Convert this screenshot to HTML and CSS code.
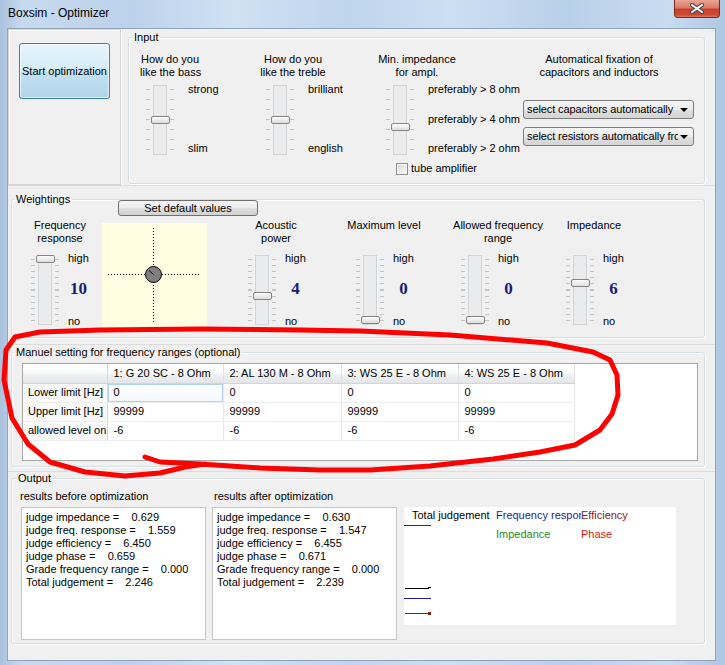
FILE: index.html
```html
<!DOCTYPE html>
<html lang="en">
<head>
    <meta charset="UTF-8">
    <title>Boxsim - Optimizer</title>
    <link rel="stylesheet" href="styles.css">
</head>
<body>

<div class="window">
    <div class="titlebar">
        <span class="title">Boxsim - Optimizer</span>
        <div class="close-btn">
            <svg width="16" height="11" viewBox="0 0 16 11">
                <path d="M3 2 L13 9 M13 2 L3 9" stroke="#4b4b4b" stroke-width="4" stroke-linecap="round"/>
                <path d="M3 2 L13 9 M13 2 L3 9" stroke="#fff" stroke-width="2" stroke-linecap="round"/>
            </svg>
        </div>
    </div>

    <div class="client">
        <!-- top: start button + input -->
        <div class="row row-top">
            <div class="panel start-panel">
                <button class="start-btn">Start optimization</button>
            </div>
            <div class="input-panel">
                <fieldset class="group group-input">
                    <legend>Input</legend>
                    <div class="input-cols">
                        <div class="in-col col-bass">
                            <div class="in-head head-bass">How do you<br>like the bass</div>
                            <div class="slider-row">
                                <div class="slider">
                                    <div class="ticks"></div><div class="track"></div><div class="ticks"></div>
                                    <div class="thumb" style="top: 31px"></div>
                                </div>
                                <div class="in-labels"><span>strong</span><span>slim</span></div>
                            </div>
                        </div>
                        <div class="in-col col-treble">
                            <div class="in-head head-treble">How do you<br>like the treble</div>
                            <div class="slider-row">
                                <div class="slider">
                                    <div class="ticks"></div><div class="track"></div><div class="ticks"></div>
                                    <div class="thumb" style="top: 31px"></div>
                                </div>
                                <div class="in-labels"><span>brilliant</span><span>english</span></div>
                            </div>
                        </div>
                        <div class="in-col col-imp">
                            <div class="in-head head-imp">Min. impedance<br>for ampl.</div>
                            <div class="slider-row">
                                <div class="slider">
                                    <div class="ticks"></div><div class="track"></div><div class="ticks"></div>
                                    <div class="thumb" style="top: 38px"></div>
                                </div>
                                <div class="in-labels">
                                    <span>preferably &gt; 8 ohm</span>
                                    <span>preferably &gt; 4 ohm</span>
                                    <span>preferably &gt; 2 ohm</span>
                                </div>
                            </div>
                            <div class="check-row">
                                <span class="checkbox"></span>
                                <span>tube amplifier</span>
                            </div>
                        </div>
                        <div class="in-col col-fix">
                            <div class="in-head head-fix">Automatical fixation of<br>capacitors and inductors</div>
                            <div class="combo combo-first">
                                <span class="combo-text">select capacitors automatically</span>
                                <span class="combo-arrow"></span>
                            </div>
                            <div class="combo">
                                <span class="combo-text">select resistors automatically from</span>
                                <span class="combo-arrow"></span>
                            </div>
                        </div>
                    </div>
                </fieldset>
            </div>
        </div>

        <!-- weightings -->
        <div class="row row-weight">
            <fieldset class="group group-weight">
                <legend>Weightings</legend>
                <button class="btn set-default">Set default values</button>
                <div class="w-cols">
                    <div class="w-col col-freq">
                        <div class="w-head head-freq">Frequency<br>response</div>
                        <div class="slider-row w-row">
                            <div class="slider slider-w">
                                <div class="ticks"></div><div class="track"></div><div class="ticks"></div>
                                <div class="thumb" style="top: 0px"></div>
                            </div>
                            <div class="w-labels"><span>high</span><span class="w-num">10</span><span>no</span></div>
                        </div>
                    </div>
                    <div class="pad">
                        <svg width="105" height="107" viewBox="0 0 105 107">
                            <line x1="6" y1="51.5" x2="99" y2="51.5" stroke="#000" stroke-dasharray="1 2"/>
                            <line x1="51.5" y1="5" x2="51.5" y2="100" stroke="#000" stroke-dasharray="1 2"/>
                            <circle cx="51.5" cy="51.5" r="8" fill="#808080" stroke="#000"/>
                            <line x1="47" y1="47.5" x2="51.5" y2="51.5" stroke="#000"/>
                        </svg>
                    </div>
                    <div class="w-col col-ac">
                        <div class="w-head head-ac">Acoustic<br>power</div>
                        <div class="slider-row w-row">
                            <div class="slider slider-w">
                                <div class="ticks"></div><div class="track"></div><div class="ticks"></div>
                                <div class="thumb" style="top: 37px"></div>
                            </div>
                            <div class="w-labels"><span>high</span><span class="w-num">4</span><span>no</span></div>
                        </div>
                    </div>
                    <div class="w-col col-max">
                        <div class="w-head head-max">Maximum level</div>
                        <div class="slider-row w-row">
                            <div class="slider slider-w">
                                <div class="ticks"></div><div class="track"></div><div class="ticks"></div>
                                <div class="thumb" style="top: 61px"></div>
                            </div>
                            <div class="w-labels"><span>high</span><span class="w-num">0</span><span>no</span></div>
                        </div>
                    </div>
                    <div class="w-col col-range">
                        <div class="w-head head-range">Allowed frequency<br>range</div>
                        <div class="slider-row w-row">
                            <div class="slider slider-w">
                                <div class="ticks"></div><div class="track"></div><div class="ticks"></div>
                                <div class="thumb" style="top: 61px"></div>
                            </div>
                            <div class="w-labels"><span>high</span><span class="w-num">0</span><span>no</span></div>
                        </div>
                    </div>
                    <div class="w-col col-wimp">
                        <div class="w-head head-wimp">Impedance</div>
                        <div class="slider-row w-row">
                            <div class="slider slider-w">
                                <div class="ticks"></div><div class="track"></div><div class="ticks"></div>
                                <div class="thumb" style="top: 24px"></div>
                            </div>
                            <div class="w-labels"><span>high</span><span class="w-num">6</span><span>no</span></div>
                        </div>
                    </div>
                </div>
            </fieldset>
        </div>

        <!-- frequency ranges -->
        <div class="row row-ranges">
            <fieldset class="group group-ranges">
                <legend>Manuel setting for frequency ranges (optional)</legend>
                <div class="grid-wrap">
                    <table class="grid">
                        <colgroup>
                            <col style="width: 84px"><col style="width: 116px"><col style="width: 118px">
                            <col style="width: 117px"><col style="width: 116px">
                        </colgroup>
                        <tr>
                            <th class="fixed"></th>
                            <th>1: G 20 SC - 8 Ohm</th>
                            <th>2: AL 130 M - 8 Ohm</th>
                            <th>3: WS 25 E - 8 Ohm</th>
                            <th>4: WS 25 E - 8 Ohm</th>
                        </tr>
                        <tr>
                            <td class="fixed">Lower limit [Hz]</td>
                            <td class="sel">0</td><td>0</td><td>0</td><td>0</td>
                        </tr>
                        <tr>
                            <td class="fixed">Upper limit [Hz]</td>
                            <td>99999</td><td>99999</td><td>99999</td><td>99999</td>
                        </tr>
                        <tr>
                            <td class="fixed">allowed level on</td>
                            <td>-6</td><td>-6</td><td>-6</td><td>-6</td>
                        </tr>
                    </table>
                </div>
            </fieldset>
        </div>

        <!-- output -->
        <div class="row row-output">
            <fieldset class="group group-output">
                <legend>Output</legend>
                <div class="out-cols">
                    <div class="out-col">
                        <div class="out-label">results before optimization</div>
                        <div class="memo">judge impedance =    0.629
judge freq. response =    1.559
judge efficiency =    6.450
judge phase =    0.659
Grade frequency range =    0.000
Total judgement =    2.246</div>
                    </div>
                    <div class="out-col out-col-after">
                        <div class="out-label">results after optimization</div>
                        <div class="memo">judge impedance =    0.630
judge freq. response =    1.547
judge efficiency =    6.455
judge phase =    0.671
Grade frequency range =    0.000
Total judgement =    2.239</div>
                    </div>
                    <div class="chart">
                        <div class="chart-legend">
                            <span>Total judgement</span>
                            <span class="c-blue">Frequency response</span>
                            <span class="c-maroon">Efficiency</span>
                            <span></span>
                            <span class="c-green">Impedance</span>
                            <span class="c-red">Phase</span>
                        </div>
                        <svg class="chart-lines" width="272" height="118" viewBox="0 0 272 118">
                            <line x1="0" y1="18.5" x2="27" y2="18.5" stroke="#7a1414"/>
                            <line x1="1" y1="81.5" x2="25" y2="81.5" stroke="#000"/>
                            <line x1="24" y1="80.5" x2="27" y2="80.5" stroke="#000"/>
                            <line x1="0" y1="91.5" x2="27" y2="91.5" stroke="#1c1c9c"/>
                            <line x1="1" y1="106.5" x2="25" y2="106.5" stroke="#8a1e12"/>
                            <rect x="24" y="105" width="3" height="3" fill="#8a1e12"/>
                        </svg>
                    </div>
                </div>
            </fieldset>
        </div>
    </div>

    <!-- hand drawn marker -->
    <svg class="annotation" width="725" height="665" viewBox="0 0 725 665">
        <polyline fill="none" stroke="#f00" stroke-width="5" stroke-linejoin="round" stroke-linecap="round"
            points="145,457 160,462 200,464 260,468 320,470 370,470 430,466 493,459 540,452 575,445 600,430 612,414 618,395 617,375 610,360 593,352 547,343 450,335 360,331 300,330 200,329 100,330 40,332 15,337 6,350 4,380 12,418 28,444 50,462 85,472 125,476 160,473 185,467 205,464"/>
    </svg>
</div>

</body>
</html>
```

FILE: styles.css
```css
body {
    margin: 0;
    font-family: "Liberation Sans", Arial, sans-serif;
    font-size: 11px;
    line-height: 13px;
    color: #000;
    background: #c3d7ed;
}

.window {
    position: relative;
    width: 725px;
    height: 665px;
    overflow: hidden;
    background: linear-gradient(90deg, #a9c2dd 0%, #c6daef 3%, #bcd2ea 18%, #d0e1f3 32%, #bfd5ec 48%, #cddff2 62%, #b9d0e9 78%, #c9dcf0 92%, #aec7e2 100%);
}

/* title bar */
.titlebar {
    height: 28px;
    display: flex;
    align-items: flex-start;
}

.title {
    margin: 5px 0 0 8px;
    font-size: 12px;
    line-height: 16px;
}

.close-btn {
    margin: 0 5px 0 auto;
    width: 46px;
    height: 18px;
    box-sizing: border-box;
    border: 1px solid #7b2a20;
    border-top: none;
    border-radius: 0 0 4px 4px;
    background: linear-gradient(#e9a696 0%, #dc7a66 45%, #c8412c 55%, #c94a33 85%, #dd7560 100%);
    display: flex;
    align-items: center;
    justify-content: center;
}

/* client area */
.client {
    margin: 0 9px 0 7px;
    height: 633px;
    box-sizing: border-box;
    border: 1px solid #8fa3ba;
    background: #f0f0f0;
}

.row {
    box-sizing: border-box;
}

.row-top {
    height: 156px;
    display: flex;
}

.row-weight {
    height: 159px;
    border-top: 1px solid #dcdcdc;
}

.row-ranges {
    height: 127px;
    border-top: 1px solid #dcdcdc;
}

.row-output {
    height: 189px;
    border-top: 1px solid #dcdcdc;
}

.start-panel {
    width: 113px;
    box-sizing: border-box;
    border: 1px solid #d6d6d6;
    box-shadow: inset 1px 1px 0 #fff;
}

.start-btn {
    display: block;
    margin: 13px 0 0 10px;
    width: 91px;
    height: 56px;
    padding: 0;
    border: 1px solid #3c7fb1;
    border-radius: 3px;
    background: linear-gradient(#e6f4fc 0%, #d5ecf9 50%, #c2e1f3 52%, #b2d5ea 100%);
    box-shadow: inset 0 0 0 1px rgba(255, 255, 255, 0.6);
    font-family: "Liberation Sans", Arial, sans-serif;
    font-size: 11px;
    color: #000;
}

.input-panel {
    flex: 1;
    border-left: 1px solid #fff;
}

/* group boxes */
.group {
    margin: 0;
    padding: 0;
    min-width: 0;
    box-sizing: border-box;
    border: 1px solid #d5dfe5;
    border-radius: 3px;
    box-shadow: inset 1px 1px 0 #fff, 1px 1px 0 #fff;
}

.group legend {
    margin-left: 2px;
    padding: 0 2px;
    line-height: 13px;
}

.group-input {
    margin: 2px 10px 0 6px;
    height: 153px;
}

.group-input legend {
    margin-left: 3px;
}

.group-weight {
    margin: 7px 10px 0 3px;
    height: 145px;
}

.group-ranges {
    margin: 1px 10px 0 3px;
    height: 121px;
}

.group-output {
    margin: 0 10px 0 3px;
    height: 172px;
}

.group-output legend {
    margin-left: 4px;
}

/* input columns */
.input-cols {
    display: flex;
    margin-top: 9px;
}

.in-col {
    flex: none;
}

.col-bass { width: 118px; margin-left: 11px; }
.col-treble { width: 118px; }
.col-imp { width: 147px; }
.col-fix { width: 171px; }

.in-head {
    white-space: nowrap;
    text-align: center;
    height: 26px;
}

.head-bass { width: 60px; }
.head-treble { width: 70px; }
.head-imp { width: 82px; }
.head-fix { width: 152px; }

.slider-row {
    display: flex;
    margin-top: 6px;
}

.col-bass .slider { margin-left: 6px; }
.col-treble .slider { margin-left: 8px; }
.col-imp .slider { margin-left: 10px; }

.slider {
    position: relative;
    display: flex;
    height: 70px;
    flex: none;
}

.ticks {
    width: 4px;
    height: 61px;
    margin-top: 4px;
    background: repeating-linear-gradient(#c4c4c4 0 1px, transparent 1px 10px);
}

.track {
    width: 14px;
    height: 70px;
    margin: 0 3px;
    box-sizing: border-box;
    border: 1px solid #d4d4d4;
    background: #e9ebec;
}

.thumb {
    position: absolute;
    left: 5px;
    width: 19px;
    height: 8px;
    box-sizing: border-box;
    border: 1px solid #858585;
    border-radius: 2px;
    background: linear-gradient(#fdfdfd, #dcdcdc);
}

.in-labels {
    margin: -2px 0 0 14px;
    height: 72px;
    display: flex;
    flex-direction: column;
    justify-content: space-between;
    white-space: nowrap;
}

.check-row {
    display: flex;
    align-items: center;
    margin: 7px 0 0 20px;
}

.checkbox {
    width: 12px;
    height: 12px;
    margin-right: 3px;
    box-sizing: border-box;
    border: 1px solid #8f8f8f;
    background: linear-gradient(135deg, #d8d8d8, #fafafa);
    box-shadow: inset 0 0 0 1px #f4f4f4;
}

.combo {
    display: flex;
    align-items: center;
    width: 171px;
    height: 19px;
    margin-top: 8px;
    padding-left: 3px;
    box-sizing: border-box;
    border: 1px solid #7c7c7c;
    border-radius: 3px;
    background: linear-gradient(#f5f5f5 0%, #ececec 50%, #e0e0e0 51%, #d4d4d4 100%);
}

.combo-first {
    margin-top: 21px;
}

.combo-text {
    flex: 1;
    overflow: hidden;
    white-space: nowrap;
    letter-spacing: -0.1px;
}

.combo-arrow {
    flex: none;
    width: 0;
    height: 0;
    margin: 0 5px 0 2px;
    border-left: 4px solid transparent;
    border-right: 4px solid transparent;
    border-top: 4px solid #000;
}

/* weightings */
.btn {
    font-family: "Liberation Sans", Arial, sans-serif;
    font-size: 11px;
    color: #000;
    padding: 0;
    border: 1px solid #707070;
    border-radius: 3px;
    background: linear-gradient(#f4f4f4 0%, #ececec 50%, #dedede 51%, #d2d2d2 100%);
}

.set-default {
    display: block;
    margin: -6px 0 0 106px;
    width: 140px;
    height: 16px;
    line-height: 13px;
}

.w-cols {
    display: flex;
    align-items: flex-start;
    margin-top: 3px;
}

.w-col {
    flex: none;
}

.col-freq { width: 71px; margin-left: 19px; }
.col-ac { width: 108px; margin-left: 41px; }
.col-max { width: 105px; }
.col-range { width: 105px; }
.col-wimp { width: 100px; }

.w-head {
    height: 26px;
    white-space: nowrap;
    text-align: center;
}

.head-freq { width: 58px; }
.head-ac { width: 56px; }
.head-max { width: 80px; margin-left: -12px; }
.head-range { width: 100px; margin-left: -13px; }
.head-wimp { width: 60px; margin-left: -2px; }

.w-row {
    margin-top: 10px;
}

.slider-w .ticks {
    height: 62px;
    background: repeating-linear-gradient(#c4c4c4 0 1px, transparent 1px 6.1px);
}

.w-labels {
    margin: -3px 0 0 9px;
    height: 76px;
    display: flex;
    flex-direction: column;
    justify-content: space-between;
    align-items: flex-start;
}

.w-num {
    align-self: center;
    margin-top: -2px;
    font-family: "Liberation Serif", "Times New Roman", serif;
    font-weight: bold;
    font-size: 17px;
    line-height: 18px;
    color: #1b1b7a;
}

.pad {
    flex: none;
    width: 105px;
    height: 107px;
    margin-top: 4px;
    background: #fffee3;
}

.pad svg {
    display: block;
}

/* ranges grid */
.grid-wrap {
    margin: 4px 0 0 10px;
    width: 676px;
    height: 98px;
    box-sizing: border-box;
    border: 1px solid #a7a7a7;
    background: #fff;
}

.grid {
    border-collapse: collapse;
    table-layout: fixed;
    width: 551px;
}

.grid tr {
    height: 19px;
}

.grid th,
.grid td {
    height: 19px;
    padding: 0 0 0 6px;
    box-sizing: border-box;
    text-align: left;
    font-weight: normal;
    white-space: nowrap;
    overflow: hidden;
    border-right: 1px solid #e8e8e8;
    border-bottom: 1px solid #eeeeee;
}

.grid th {
    background: linear-gradient(#ffffff 0%, #fbfbfc 45%, #f1f2f4 55%, #e3e5e8 100%);
    border-bottom: 1px solid #d5d5d5;
    border-right: 1px solid #e2e2e2;
}

.grid .fixed {
    padding-left: 5px;
    background: #f9f9f9;
    border-right: 1px solid #d9d9d9;
}

.grid th.fixed {
    background: linear-gradient(#ffffff 0%, #fbfbfc 45%, #f1f2f4 55%, #e3e5e8 100%);
}

.grid .sel {
    box-shadow: inset 0 0 0 1px #b2d2ef;
    background: linear-gradient(#fdfeff, #f4f8fd);
}

/* output */
.out-cols {
    display: flex;
    align-items: flex-start;
    margin: 5px 0 0 9px;
}

.out-col {
    flex: none;
    width: 185px;
}

.out-col-after {
    margin-left: 6px;
}

.out-label {
    margin-left: -1px;
    white-space: nowrap;
}

.out-col-after .out-label {
    margin-left: 2px;
}

.memo {
    margin-top: 4px;
    height: 133px;
    box-sizing: border-box;
    padding: 3px 0 0 4px;
    border: 1px solid #c6c6c6;
    background: #fff;
    white-space: pre;
    overflow: hidden;
}

.chart {
    position: relative;
    flex: none;
    width: 272px;
    height: 118px;
    margin: 17px 0 0 7px;
    background: #fff;
}

.chart-legend {
    display: grid;
    grid-template-columns: 84px 85px auto;
    row-gap: 6px;
    padding: 2px 0 0 8px;
}

.chart-legend span {
    overflow: hidden;
    white-space: nowrap;
}

.c-blue { color: #1d1da8; }
.c-maroon { color: #8b1a1a; }
.c-green { color: #1e8a1e; }
.c-red { color: #d81818; }

.chart-lines {
    position: absolute;
    left: 0;
    top: 0;
}

.annotation {
    position: absolute;
    left: 0;
    top: 0;
    pointer-events: none;
}
```
